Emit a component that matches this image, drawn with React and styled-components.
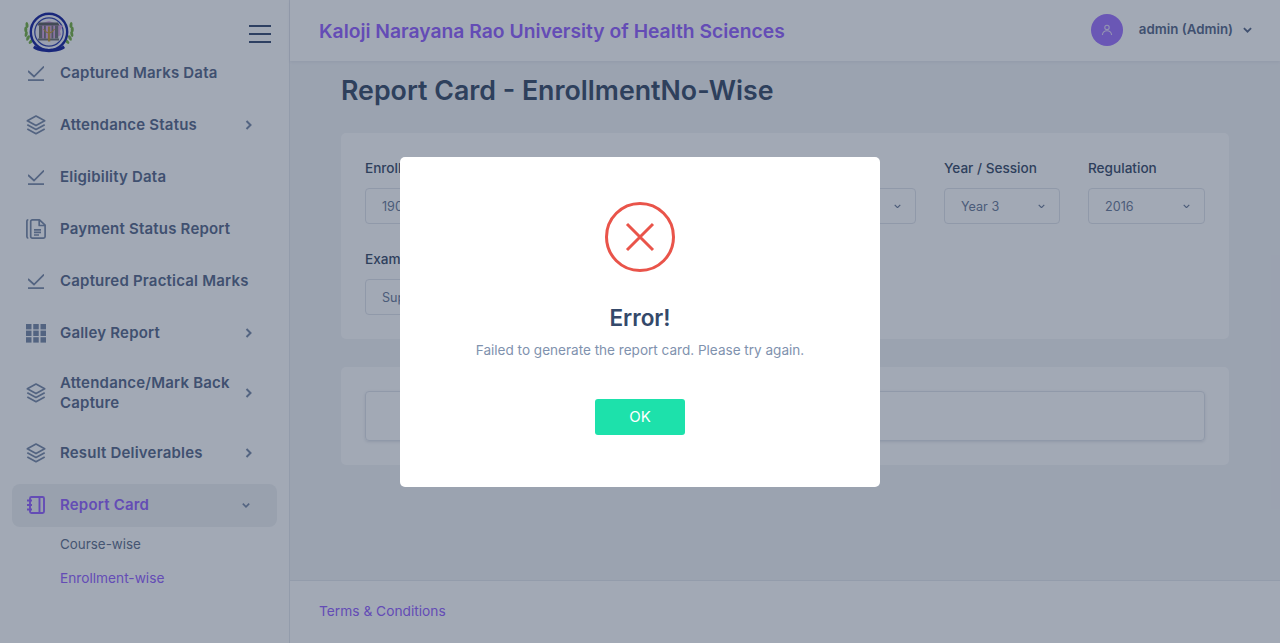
import React from "react";
import styled, { createGlobalStyle } from "styled-components";

const Global = createGlobalStyle`
  html, body { margin: 0; padding: 0; height: 100%; }
  body { font-family: Inter, "Open Sans", sans-serif; background: #f3f4f7; overflow: hidden; }
  #root { height: 643px; }
  * { box-sizing: border-box; }
`;

const Shell = styled.div`
  display: flex;
  width: 1280px;
  height: 643px;
  position: relative;
  overflow: hidden;
`;
const Sidebar = styled.aside`
  width: 290px;
  flex: none;
  background: #fff;
  border-right: 1px solid #e6e8ee;
  display: flex;
  flex-direction: column;
`;
const Brand = styled.div`
  height: 61px;
  flex: none;
  display: flex;
  align-items: flex-start;
  justify-content: space-between;
  padding: 11px 18px 0 24px;
`;
const Burger = styled.div`
  width: 22px;
  margin-top: 14px;
  display: flex;
  flex-direction: column;
  gap: 6px;
  span { height: 2px; background: #374b70; display: block; }
`;
const MenuClip = styled.div`
  flex: 1;
  overflow: hidden;
  padding: 0 12px;
`;
const Menu = styled.nav`
  margin-top: -9.5px;
  display: flex;
  flex-direction: column;
  gap: 9px;
`;
const Item = styled.div`
  display: flex;
  align-items: center;
  padding: ${p => (p.$tall ? "9.5px" : "11.5px")} 24px ${p => (p.$tall ? "9.5px" : "11.5px")} 14px;
  border-radius: 8px;
  background: ${p => (p.$active ? "rgba(34,51,84,.07)" : "transparent")};
  color: ${p => (p.$active ? "#9460ff" : "#566789")};
  font-size: 15px;
  font-weight: 600;
  letter-spacing: .2px;
  line-height: 20px;
`;
const ItemIcon = styled.span`
  width: 20px;
  height: 20px;
  flex: none;
  margin-right: 14px;
  display: flex;
  align-items: center;
  justify-content: center;
  color: ${p => (p.$active ? "#9460ff" : "#7888a6")};
  svg { display: block; }
`;
const ItemLabel = styled.span`
  flex: 1;
  min-width: 0;
`;
const Caret = styled.span`
  width: 8px;
  display: flex;
  justify-content: center;
  margin-right: ${p => (p.$open ? "3px" : "1px")};
  color: #7888a6;
`;
const SubMenu = styled.div`
  display: flex;
  flex-direction: column;
  gap: 14px;
  margin-top: -2px;
  padding-left: 48px;
`;
const SubLink = styled.div`
  font-size: ${p => (p.$active ? "13.7px" : "13.4px")};
  line-height: 20px;
  color: ${p => (p.$active ? "#9460ff" : "#5f6f8c")};
`;

const Main = styled.div`
  flex: 1;
  min-width: 0;
  display: flex;
  flex-direction: column;
`;
const Topbar = styled.header`
  height: 61px;
  flex: none;
  background: #fff;
  box-shadow: 0 1px 3px rgba(34,51,84,.08);
  display: flex;
  align-items: center;
  padding: 0 28px 0 29px;
  position: relative;
`;
const UniTitle = styled.div`
  flex: 1;
  font-size: 19.3px;
  font-weight: 600;
  color: #9460ff;
`;
const Avatar = styled.div`
  width: 32px;
  height: 32px;
  border-radius: 50%;
  background: #9f72ff;
  display: flex;
  align-items: center;
  justify-content: center;
  margin-right: 16px;
  margin-top: -2px;
`;
const UserName = styled.div`
  font-size: 13.3px;
  font-weight: 600;
  color: #566789;
  margin-right: 10px;
  margin-top: -3px;
`;
const Content = styled.main`
  flex: 1;
  padding: 12px 51px 0;
  min-height: 0;
`;
const PageTitle = styled.h1`
  margin: 0 0 26px;
  font-size: 26.75px;
  line-height: 34px;
  font-weight: 600;
  color: #374a67;
`;
const Card = styled.section`
  background: #fff;
  border-radius: 5px;
  padding: 24px;
  margin-bottom: 28px;
`;
const FormGrid = styled.div`
  display: grid;
  grid-template-columns: 1fr 1fr 116px 117px;
  gap: 24px 28px;
`;
const Field = styled.div`
  display: flex;
  flex-direction: column;
  gap: 9px;
`;
const Label = styled.label`
  font-size: 13.6px;
  line-height: 22px;
  font-weight: 500;
  color: #374a67;
`;
const Select = styled.div`
  height: 36px;
  border: 1px solid #e0e3ea;
  border-radius: 4px;
  background: #fff;
  display: flex;
  align-items: center;
  justify-content: space-between;
  padding: 0 14px 0 16px;
  font-size: 12.6px;
  color: #6a7a98;
`;
const ResultBox = styled.div`
  height: 50px;
  border: 1px solid #e0e3ea;
  border-radius: 4px;
  box-shadow: 0 1px 3px rgba(34,51,84,.14);
`;
const Footer = styled.footer`
  height: 63px;
  flex: none;
  background: #fff;
  border-top: 1px solid #e6e8ee;
  display: flex;
  align-items: center;
  padding: 0 0 2px 29px;
  font-size: 13.75px;
  color: #9460ff;
`;

const Overlay = styled.div`
  position: absolute;
  inset: 0;
  background: rgba(34,49,78,.42);
  display: flex;
  align-items: center;
  justify-content: center;
`;
const Modal = styled.div`
  width: 480px;
  height: 330px;
  background: #fff;
  border-radius: 5px;
  display: flex;
  flex-direction: column;
  align-items: center;
  padding-top: 45px;
`;
const ErrorIcon = styled.svg`
  display: block;
  margin-bottom: 30px;
`;
const ModalTitle = styled.h2`
  margin: 0 0 6px;
  font-size: 22.5px;
  line-height: 32px;
  font-weight: 600;
  color: #34496a;
`;
const ModalText = styled.p`
  margin: 0 0 39px;
  font-size: 13.55px;
  line-height: 20px;
  color: #7f92ae;
`;
const OkButton = styled.button`
  width: 90px;
  height: 36px;
  border: 0;
  border-radius: 3px;
  background: #1de1ab;
  color: #fff;
  padding: 0;
  font: 400 15px Inter, sans-serif;
`;

const CheckIcon = () => (
  <svg width="16" height="15" viewBox="0 0 16 15" fill="none" stroke="currentColor" strokeWidth="1.7">
    <path d="M0 5l6 5.500L16 .5" />
    <path d="M0 14.100h16" />
  </svg>
);
const LayersIcon = () => (
  <svg width="20" height="20" viewBox="0 0 20 20" fill="none" stroke="currentColor" strokeWidth="1.7" strokeLinejoin="round">
    <path d="M10 1l8.700 4.800L10 10.600 1.300 5.800z" />
    <path d="M1.300 9.700l8.700 4.800 8.700-4.800" />
    <path d="M1.300 13.900l8.700 4.800 8.700-4.800" />
  </svg>
);
const DocIcon = () => (
  <svg width="20" height="20" viewBox="0 0 20 20" fill="none" stroke="currentColor" strokeWidth="1.7" strokeLinejoin="round">
    <path d="M2.300 .9C1.200 .9.900 1.600.900 2.500v15c0 .9.300 1.600 1.400 1.600" />
    <path d="M6.300.9h7.200l5.600 5.300v11.300a1.600 1.600 0 0 1-1.600 1.600H6.300a1.600 1.600 0 0 1-1.600-1.600V2.500A1.600 1.600 0 0 1 6.300.9z" />
    <path d="M13.200.9v5.600h5.900M8 10.800h7M8 13.400h7M8 16h5" />
  </svg>
);
const GridIcon = () => (
  <svg width="20" height="19" viewBox="0 0 20 19" fill="currentColor">
    {[0, 7.25, 14.500].map(x => [0, 6.600, 13.200].map(y => <rect key={`${x}-${y}`} x={x} y={y} width="5.500" height="5.400" />))}
  </svg>
);
const NotebookIcon = () => (
  <svg width="18" height="18" viewBox="0 0 18 18" fill="none" stroke="currentColor" strokeWidth="1.9" strokeLinejoin="round">
    <rect x="3" y="1" width="14" height="16" rx="1.400" />
    <path d="M12.500 1v16M0 4.500h5M0 9h5M0 13.500h5" />
  </svg>
);
const RightCaret = () => (
  <svg width="7" height="10" viewBox="0 0 7 10" fill="none" stroke="currentColor" strokeWidth="2">
    <path d="M1.500 1l4 4-4 4" />
  </svg>
);
const DownCaret = ({ size = 10, weight = 2, color = "currentColor" }) => (
  <svg width={size} height={size * 0.7} viewBox="0 0 10 7" fill="none" stroke={color} strokeWidth={weight}>
    <path d="M1 1.200l4 4 4-4" />
  </svg>
);

const leafArc = [
  [3, 14, -8], [1.800, 18.500, 0], [2.200, 23, 12], [4, 27, 28], [7, 30.500, 45],
];
const Logo = () => (
  <svg width="50" height="43" viewBox="0 0 50 43">
    <g fill="#76b040">
      {leafArc.map(([x, y, r]) => (
        <g key={y}>
          <ellipse cx={x} cy={y} rx="1.500" ry="3" transform={`rotate(${r} ${x} ${y})`} />
          <ellipse cx={50 - x} cy={y} rx="1.500" ry="3" transform={`rotate(${-r} ${50 - x} ${y})`} />
        </g>
      ))}
    </g>
    <circle cx="25" cy="21" r="18.200" fill="#f7f6fa" stroke="#14209c" strokeWidth="2.400" />
    <circle cx="25" cy="21" r="14.200" fill="#f2eef4" stroke="#2a3aa8" strokeWidth="1.200" />
    <path d="M15 13l10-3 14 5-3 5 1 4-6 3-13 1z" fill="#d9a6e2" />
    <path d="M15 11.500h19l1.500 3h-22z" fill="#5c5c5c" />
    <g fill="#707070">
      <rect x="15" y="14.500" width="3.200" height="13" />
      <rect x="20" y="14.500" width="1.800" height="13" />
      <rect x="27.500" y="14.500" width="1.800" height="13" />
      <rect x="31" y="14.500" width="3.200" height="13" />
      <rect x="14" y="27.500" width="21" height="2" />
    </g>
    <path d="M24.500 16h1.200v14h-1.200zM19.500 18c2 3 3.500 4 5.500 4s3.500-1 5.500-4" fill="none" stroke="#c2962c" strokeWidth="1.100" />
    <path d="M9 37c6 5.500 26 5.500 32 0l-1.500-2.500c-6 4.500-23 4.500-29 0z" fill="#14209c" />
  </svg>
);

const items = [
  { label: "Captured Marks Data", icon: <CheckIcon /> },
  { label: "Attendance Status", icon: <LayersIcon />, more: true },
  { label: "Eligibility Data", icon: <CheckIcon /> },
  { label: "Payment Status Report", icon: <DocIcon /> },
  { label: "Captured Practical Marks", icon: <CheckIcon /> },
  { label: "Galley Report", icon: <GridIcon />, more: true },
  { label: "Attendance/Mark Back Capture", icon: <LayersIcon />, more: true, tall: true },
  { label: "Result Deliverables", icon: <LayersIcon />, more: true },
];

export default function App() {
  return (
    <>
      <Global />
      <Shell>
        <Sidebar>
          <Brand>
            <Logo />
            <Burger><span /><span /><span /></Burger>
          </Brand>
          <MenuClip>
            <Menu>
              {items.map(it => (
                <Item key={it.label} $tall={it.tall}>
                  <ItemIcon>{it.icon}</ItemIcon>
                  <ItemLabel>{it.label}</ItemLabel>
                  {it.more && <Caret><RightCaret /></Caret>}
                </Item>
              ))}
              <Item $active>
                <ItemIcon $active><NotebookIcon /></ItemIcon>
                <ItemLabel>Report Card</ItemLabel>
                <Caret $open><DownCaret /></Caret>
              </Item>
              <SubMenu>
                <SubLink>Course-wise</SubLink>
                <SubLink $active>Enrollment-wise</SubLink>
              </SubMenu>
            </Menu>
          </MenuClip>
        </Sidebar>
        <Main>
          <Topbar>
            <UniTitle>Kaloji Narayana Rao University of Health Sciences</UniTitle>
            <Avatar>
              <svg width="12" height="12" viewBox="0 0 12 12" fill="none" stroke="#e6dcf8" strokeWidth="1.100">
                <circle cx="6" cy="3.400" r="2.200" />
                <path d="M1.400 11c.3-3 2-4.200 4.600-4.200s4.300 1.200 4.600 4.200" />
              </svg>
            </Avatar>
            <UserName>admin (Admin)</UserName>
            <DownCaret size={9} color="#566789" />
          </Topbar>
          <Content>
            <PageTitle>Report Card - EnrollmentNo-Wise</PageTitle>
            <Card>
              <FormGrid>
                <Field>
                  <Label>Enrollment No.</Label>
                  <Select>1900123456</Select>
                </Field>
                <Field>
                  <Label>Course</Label>
                  <Select>MBBS <DownCaret size={7} weight={1.700} /></Select>
                </Field>
                <Field>
                  <Label>Year / Session</Label>
                  <Select>Year 3 <DownCaret size={7} weight={1.700} /></Select>
                </Field>
                <Field>
                  <Label>Regulation</Label>
                  <Select>2016 <DownCaret size={7} weight={1.700} /></Select>
                </Field>
                <Field>
                  <Label>Exam Type</Label>
                  <Select>Supplementary</Select>
                </Field>
              </FormGrid>
            </Card>
            <Card>
              <ResultBox />
            </Card>
          </Content>
          <Footer>Terms &amp; Conditions</Footer>
        </Main>
        <Overlay>
          <Modal>
            <ErrorIcon width="70" height="70" viewBox="0 0 70 70" fill="none" stroke="#e9544a">
              <circle cx="35" cy="35" r="33.500" strokeWidth="3" />
              <path d="M22 22l26 26M48 22L22 48" strokeWidth="3" />
            </ErrorIcon>
            <ModalTitle>Error!</ModalTitle>
            <ModalText>Failed to generate the report card. Please try again.</ModalText>
            <OkButton>OK</OkButton>
          </Modal>
        </Overlay>
      </Shell>
    </>
  );
}
